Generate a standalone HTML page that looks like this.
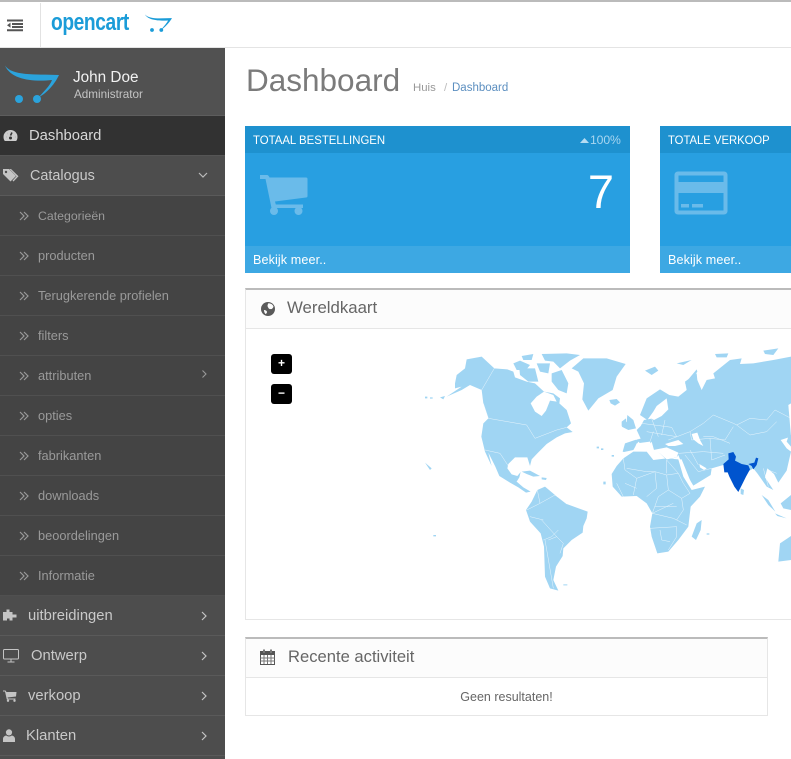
<!DOCTYPE html>
<html><head><meta charset="utf-8"><title>Dashboard</title>
<style>
html,body{margin:0;padding:0;background:#fff;}
body{width:791px;height:759px;overflow:hidden;position:relative;font-family:"Liberation Sans",sans-serif;}
.a{position:absolute;white-space:nowrap;}
.row{position:absolute;left:0;width:225px;height:39px;border-bottom:1px solid #5a5a5a;}
.main{background:#4d4d4d;color:#c9c9c9;font-size:14.8px;line-height:41px;}
.sub{background:#444;color:#9a9a9a;font-size:12.8px;line-height:40px;border-bottom-color:#505050;}
.row span{position:absolute;top:0;}
.row svg{position:absolute;}
.dbl{left:19px;top:15px;}
.chev{left:200px;top:15px;}
.card{position:absolute;top:126px;height:147px;background:#289fe1;overflow:hidden;color:#fff;}
.ch{position:absolute;left:0;top:0;width:100%;height:27px;background:#1e91cf;}
.cf{position:absolute;left:0;bottom:0;width:100%;height:27px;background:#3da8e3;}
.ct{font-size:12.2px;line-height:16px;color:#fff;transform-origin:0 0;}
</style></head><body>

<!-- top bar -->
<div class="a" style="left:0;top:0;width:791px;height:3px;background:#fff;border-top:2px solid #bbb;box-sizing:border-box"></div>
<div class="a" style="left:0;top:47px;width:791px;height:1px;background:#e4e4e4"></div>
<div class="a" style="left:40px;top:3px;width:1px;height:44px;background:#e2e2e2"></div>
<svg class="a" style="left:6px;top:19px" width="18" height="13" viewBox="0 0 18 13"><path d="M1 0.500H17V2.500H1zM6 4H17V6H6zM6 7H17V9H6zM1 10.300H17V12.300H1zM4.500 3.600V8.800L1 6.200z" fill="#555"/></svg>
<div class="a" style="left:51px;top:8px;font:bold 24px/30px 'Liberation Sans',sans-serif;color:#1b9cd8;letter-spacing:-.5px;transform:scaleX(.8);transform-origin:0 0">opencart</div>
<svg class="a" style="left:143px;top:13px" width="31" height="23" viewBox="0 0 31 23"><path d="M2 1.500C7 7 19 5 29 5.200C26 10 21 15 18 17C21 13 24 10 25 7.500C15 8 5 7 2 1.500z" fill="#1b9cd8"/><circle cx="9" cy="17" r="1.900" fill="#1b9cd8"/><circle cx="18.300" cy="17" r="1.900" fill="#1b9cd8"/></svg>

<!-- sidebar -->
<div class="a" style="left:0;top:48px;width:225px;height:711px;background:#4d4d4d"></div>
<div class="a" style="left:0;top:48px;width:225px;height:67px;background:#515151;border-bottom:1px solid #5d5d5d"></div>
<svg class="a" style="left:4px;top:64px" width="56" height="42" viewBox="0 0 56 42"><path d="M1 1.500C8 12 30 10 55 11C50 22 40 31 35 33C39 28 46 22 48 16C30 18 7 16 1 1.500z" fill="#2ba3dc"/><circle cx="15" cy="35" r="4" fill="#2ba3dc"/><circle cx="33" cy="35" r="4" fill="#2ba3dc"/></svg>
<div class="a" style="left:73px;top:68px;font-size:15.300px;line-height:20px;color:#f2f2f2">John Doe</div>
<div class="a" style="left:74px;top:87px;font-size:11.700px;line-height:15px;color:#c4c4c4">Administrator</div>

<div class="row main" style="top:116px;background:#323232;color:#d8d8d8;border-bottom-color:#555"><svg style="left:3px;top:13px" width="15" height="13" viewBox="0 0 15 13"><path d="M7.500 1A7 7 0 0 0 .5 8C.5 9.500 1 11 1.800 12H13.200C14 11 14.500 9.500 14.500 8A7 7 0 0 0 7.500 1z" fill="#ccc"/><path d="M7.500 6.500L9 3.500M3 8h.1M4.500 4.500h.1M12 8h.1M7.500 3h.1" stroke="#333" stroke-width="1.500" fill="none"/><circle cx="7.500" cy="9" r="1.500" fill="#333"/></svg><span style="left:29px">Dashboard</span></div>
<div class="row main" style="top:156px"><svg style="left:3px;top:12px" width="16" height="15" viewBox="0 0 16 15"><path d="M0 1H6L13 8L7.500 13.500L0 6z" fill="#c4c4c4"/><path d="M8 1L15.500 8.300L10.500 13.500L9.500 12.600L13.500 8.300L6.500 1z" fill="#c4c4c4"/><circle cx="3" cy="4" r="1.200" fill="#4d4d4d"/></svg><span style="left:30px;font-size:14.400px">Catalogus</span><svg class="chev" style="left:198px;top:16px" width="10" height="7" viewBox="0 0 10 7"><path d="M1 1L5 5L9 1" stroke="#bbb" stroke-width="1.200" fill="none"/></svg></div>

<div class="row sub" style="top:196px"><svg class="dbl" width="10" height="10" viewBox="0 0 10 10"><path d="M1 1L5 5L1 9M5 1L9 5L5 9" stroke="#999" stroke-width="1.200" fill="none"/></svg><span style="left:38px;font-size:12.300px">Categorieën</span></div>
<div class="row sub" style="top:236px"><svg class="dbl" width="10" height="10" viewBox="0 0 10 10"><path d="M1 1L5 5L1 9M5 1L9 5L5 9" stroke="#999" stroke-width="1.200" fill="none"/></svg><span style="left:38px">producten</span></div>
<div class="row sub" style="top:276px"><svg class="dbl" width="10" height="10" viewBox="0 0 10 10"><path d="M1 1L5 5L1 9M5 1L9 5L5 9" stroke="#999" stroke-width="1.200" fill="none"/></svg><span style="left:38px">Terugkerende profielen</span></div>
<div class="row sub" style="top:316px"><svg class="dbl" width="10" height="10" viewBox="0 0 10 10"><path d="M1 1L5 5L1 9M5 1L9 5L5 9" stroke="#999" stroke-width="1.200" fill="none"/></svg><span style="left:38px">filters</span></div>
<div class="row sub" style="top:356px"><svg class="dbl" width="10" height="10" viewBox="0 0 10 10"><path d="M1 1L5 5L1 9M5 1L9 5L5 9" stroke="#999" stroke-width="1.200" fill="none"/></svg><span style="left:38px">attributen</span><svg class="chev" style="top:13px;left:201px" width="7" height="10" viewBox="0 0 7 10"><path d="M1.500 1.500L5 5L1.500 8.500" stroke="#999" stroke-width="1.100" fill="none"/></svg></div>
<div class="row sub" style="top:396px"><svg class="dbl" width="10" height="10" viewBox="0 0 10 10"><path d="M1 1L5 5L1 9M5 1L9 5L5 9" stroke="#999" stroke-width="1.200" fill="none"/></svg><span style="left:38px">opties</span></div>
<div class="row sub" style="top:436px"><svg class="dbl" width="10" height="10" viewBox="0 0 10 10"><path d="M1 1L5 5L1 9M5 1L9 5L5 9" stroke="#999" stroke-width="1.200" fill="none"/></svg><span style="left:38px">fabrikanten</span></div>
<div class="row sub" style="top:476px"><svg class="dbl" width="10" height="10" viewBox="0 0 10 10"><path d="M1 1L5 5L1 9M5 1L9 5L5 9" stroke="#999" stroke-width="1.200" fill="none"/></svg><span style="left:38px">downloads</span></div>
<div class="row sub" style="top:516px"><svg class="dbl" width="10" height="10" viewBox="0 0 10 10"><path d="M1 1L5 5L1 9M5 1L9 5L5 9" stroke="#999" stroke-width="1.200" fill="none"/></svg><span style="left:38px">beoordelingen</span></div>
<div class="row sub" style="top:556px"><svg class="dbl" width="10" height="10" viewBox="0 0 10 10"><path d="M1 1L5 5L1 9M5 1L9 5L5 9" stroke="#999" stroke-width="1.200" fill="none"/></svg><span style="left:38px">Informatie</span></div>

<div class="row main" style="top:596px"><svg style="left:3px;top:13px" width="14" height="12" viewBox="0 0 14 12"><path d="M0 3H3.500V0.500H6.500V3H9.500V5.500H13.500V8.500H9.500V11.500H6.500V9.500H4V11.500H0z" fill="#c4c4c4"/></svg><span style="left:28px">uitbreidingen</span><svg class="chev" width="8" height="10" viewBox="0 0 8 10"><path d="M2 1L6 5L2 9" stroke="#c4c4c4" stroke-width="1.200" fill="none"/></svg></div>
<div class="row main" style="top:636px"><svg style="left:3px;top:13px" width="16" height="14" viewBox="0 0 16 14"><rect x=".5" y=".5" width="15" height="9.500" rx="1" fill="none" stroke="#c4c4c4"/><path d="M8 10.500V12.500M4.500 13H11.500" stroke="#c4c4c4" fill="none"/></svg><span style="left:31px">Ontwerp</span><svg class="chev" width="8" height="10" viewBox="0 0 8 10"><path d="M2 1L6 5L2 9" stroke="#c4c4c4" stroke-width="1.200" fill="none"/></svg></div>
<div class="row main" style="top:676px"><svg style="left:3px;top:14px" width="14" height="12" viewBox="0 0 14 12"><path d="M0 .5H2.500L3.500 2H13.500L13 6.500L4.500 7.500L5 8.500H12.500V9.500H3.800L2 1.500H0z" fill="#c4c4c4"/><circle cx="5" cy="10.700" r="1.200" fill="#c4c4c4"/><circle cx="11.500" cy="10.700" r="1.200" fill="#c4c4c4"/></svg><span style="left:28px">verkoop</span><svg class="chev" width="8" height="10" viewBox="0 0 8 10"><path d="M2 1L6 5L2 9" stroke="#c4c4c4" stroke-width="1.200" fill="none"/></svg></div>
<div class="row main" style="top:716px"><svg style="left:3px;top:13px" width="12" height="13" viewBox="0 0 12 13"><circle cx="6" cy="3.400" r="3.100" fill="#c4c4c4"/><path d="M0 13V10C0 8 1.500 6.800 3.200 6.500C5 7.800 7 7.800 8.800 6.500C10.500 6.800 12 8 12 10V13z" fill="#c4c4c4"/></svg><span style="left:26px">Klanten</span><svg class="chev" width="8" height="10" viewBox="0 0 8 10"><path d="M2 1L6 5L2 9" stroke="#c4c4c4" stroke-width="1.200" fill="none"/></svg></div>

<!-- page title -->
<div class="a" style="left:246px;top:61px;font-size:31.500px;line-height:38px;color:#7b7b7b">Dashboard</div>
<div class="a" style="left:413px;top:81px;font-size:11.400px;line-height:14px;color:#999">Huis</div>
<div class="a" style="left:444px;top:81px;font-size:11.400px;line-height:14px;color:#bbb">/</div>
<div class="a" style="left:452px;top:81px;font-size:11.500px;line-height:14px;color:#5c8fc0">Dashboard</div>

<!-- card 1 -->
<div class="card" style="left:245px;width:385px">
  <div class="ch"></div><div class="cf"></div>
  <div class="a ct" style="left:8px;top:6px;transform:scaleX(.935)">TOTAAL BESTELLINGEN</div>
  <svg class="a" style="left:335px;top:12px" width="9" height="5" viewBox="0 0 9 5"><path d="M0 5L4.500 0L9 5z" fill="#b5dcf2"/></svg>
  <div class="a" style="left:345px;top:6px;font-size:12.200px;line-height:16px;color:#a9d6f0;letter-spacing:-.1px">100%</div>
  <svg class="a" style="left:14px;top:48px" width="50" height="42" viewBox="0 0 50 42"><path d="M1 1H8C9 1 10 2 10.500 3.500H47C48 3.500 48.500 4 48.500 5V22C48.500 23 48 23.500 47 23.500L16 27.500L16.800 30.500H44V34H12.500L6.500 5H1z" fill="#6abbea"/><circle cx="15" cy="37" r="4" fill="#6abbea"/><circle cx="39.500" cy="37" r="4" fill="#6abbea"/></svg>
  <div class="a" style="right:16px;top:40px;font-size:47px;line-height:52px;color:#fff">7</div>
  <div class="a" style="left:8px;top:126px;font-size:12.600px;line-height:16px;color:#fff;letter-spacing:.1px">Bekijk meer..</div>
</div>
<!-- card 2 -->
<div class="card" style="left:660px;width:131px">
  <div class="ch"></div><div class="cf"></div>
  <div class="a ct" style="left:8px;top:6px;transform:scaleX(.925)">TOTALE VERKOOP</div>
  <svg class="a" style="left:14px;top:45px" width="54" height="44" viewBox="0 0 54 44"><path d="M4 .5H50C52 .5 53.500 2 53.500 4V40C53.500 42 52 43.500 50 43.500H4C2 43.500 .5 42 .5 40V4C.5 2 2 .5 4 .5zM4.500 4.500V11H49.500V4.500zM4.500 22V39.500H49.500V22z" fill="#6abbea" fill-rule="evenodd"/><path d="M7 33H15V36.500H7zM18 33H29V36.500H18z" fill="#6abbea"/></svg>
  <div class="a" style="left:8px;top:126px;font-size:12.600px;line-height:16px;color:#fff;letter-spacing:.1px">Bekijk meer..</div>
</div>

<!-- world map panel -->
<div class="a" style="left:245px;top:288px;width:550px;height:332px;box-sizing:border-box;border:1px solid #e6e6e6;border-top:2px solid #bbb;background:#fff"></div>
<div class="a" style="left:246px;top:290px;width:545px;height:38px;background:#fcfcfc;border-bottom:1px solid #e6e6e6"></div>
<svg class="a" style="left:261px;top:302px" width="14" height="14" viewBox="0 0 14 14"><circle cx="7" cy="7" r="7" fill="#5a5a5a"/><path d="M7 1.500C9 1 11.500 2 12.500 4.500C12 6.500 10.500 7.500 9.500 7C8 7.500 7 5.500 6.500 4C6.500 3 7 2.500 7 1.500zM3 8C4.500 8 6 9 6 10C6 11 5 12 4.500 12C3.500 11 3 9.500 3 8z" fill="#fcfcfc"/></svg>
<div class="a" style="left:287px;top:298px;font-size:16.800px;line-height:20px;color:#666">Wereldkaart</div>
<div class="a" style="left:271px;top:354px;width:21px;height:20px;background:#000;border-radius:3px;color:#fff;font:bold 12px/19px 'Liberation Sans',sans-serif;text-align:center">+</div>
<div class="a" style="left:271px;top:384px;width:21px;height:20px;background:#000;border-radius:3px;color:#fff;font:bold 12px/18px 'Liberation Sans',sans-serif;text-align:center">−</div>

<svg class="a" style="left:420px;top:340px" width="371" height="260" viewBox="0 0 1113 780">
<g fill="#a0d5f3">
<!-- N. America -->
<path d="M105 130L110 105L135 85L140 58L185 50L223 85L262 88L280 95L285 112L320 125L345 130L372 155L400 160L420 175L418 190L440 210L453 250L440 262L458 276L435 280L410 292L380 312L352 340L335 358L330 378L322 352L285 352L265 372L262 385L275 403L292 408L302 396L298 412L290 425L310 442L332 455L318 458L295 442L270 428L238 408L226 380L205 338L215 378L195 335L184 290L190 250L205 235L190 190L185 150L150 135L125 150L80 170L125 140L105 145Z"/>
<path d="M280 70L300 62L330 75L318 90L290 90ZM298 85L345 85L355 125L325 125L300 105ZM350 70L390 70L385 100L360 95ZM305 48L340 42L335 60L310 60ZM365 42L440 40L480 45L450 62L420 85L400 65L375 62ZM395 100L425 90L445 130L440 160L415 150L395 125Z"/>
<path d="M305 395L330 392L360 408L340 410L320 402ZM365 412L380 414L378 420L365 418Z"/>
<!-- Greenland -->
<path d="M455 85L490 55L560 55L617 72L590 110L578 150L535 175L505 212L487 178L492 130L475 95Z"/>
<path d="M568 180L590 177L600 187L585 197L572 190Z"/>
<path d="M675 92L705 80L715 92L695 105Z"/>
<!-- South America -->
<path d="M318 510L335 485L352 450L375 440L405 465L440 492L503 515L500 535L490 558L488 578L455 600L430 625L428 648L408 680L400 720L415 752L390 745L375 710L372 620L362 580L330 545Z"/>
<!-- Africa -->
<path d="M575 402L590 378L610 355L640 335L680 335L700 360L740 355L775 358L790 410L815 450L855 440L840 470L812 500L805 560L775 600L745 635L712 640L695 590L690 560L697 520L680 490L650 468L605 470L578 440Z"/>
<path d="M815 590L830 550L845 540L842 570L828 600Z"/>
<!-- Eurasia -->
<path d="M608 335L615 310L645 300L662 296L650 270L662 258L672 240L695 236L702 240L725 228L745 208L740 175L710 198L700 215L682 240L660 225L680 175L720 148L748 165L775 170L800 150L795 125L830 100L832 120L845 150L860 120L885 115L880 100L930 60L965 55L960 72L1000 70L1060 60L1113 50V190L1105 195L1113 290L1082 300L1100 325L1113 335L1100 392L1075 428L1062 402L1042 385L1035 412L1060 450L1040 440L1012 400L1000 385L975 400L955 455L930 405L910 375L875 385L872 405L820 437L795 395L775 345L770 352L740 360L720 340L702 330L695 305L680 330L655 305L640 330L612 336Z"/>
<path d="M605 260L620 245L622 225L640 240L648 265L625 270ZM605 245L618 235L618 255L605 258Z"/>
<path d="M1105 290L1113 285V320L1100 305Z"/>
<path d="M885 42L925 40L920 52L890 52ZM1030 32L1075 25L1060 45L1035 42ZM770 70L815 60L790 75ZM795 130L830 88L832 95L805 135Z" />
<path d="M1025 465L1045 480L1066 515L1045 495ZM1082 490L1113 465V510L1090 505ZM1065 520L1100 535L1072 528ZM962 445L972 450L970 465L962 462Z"/>
<!-- Australia -->
<path d="M1075 665L1080 610L1113 588V660Z"/>
<!-- small islands -->
<path d="M15 368L35 385L30 390ZM60 172L75 168L70 178ZM15 170H22V175H15ZM30 172H38V176H30ZM530 320H537V325H530ZM543 325H550V330H543ZM550 425H557V433H550ZM40 585H48V589H40ZM575 345H582V350H575ZM860 580H868V584H860ZM430 733H442V736H430Z"/>
</g>
<!-- water -->
<g fill="#fff">
<path d="M332 190L350 170L372 155L400 165L410 185L390 182L378 212L365 228L345 215Z"/>
<path d="M650 310L690 305L700 330L740 322L775 338L770 352L740 358L720 340L700 332L678 335L640 334Z"/>
<path d="M735 312L775 300L790 312L765 318L745 318Z"/>
<path d="M815 282L832 278L840 300L850 318L835 310L820 298Z"/>
<path d="M777 358L785 358L818 440L810 430Z"/>
<path d="M838 372L860 385L852 390L840 382Z"/>
</g>
<!-- borders -->
<g fill="none" stroke="#fff" stroke-width="1.500" opacity=".75">
<path d="M223 85L185 150M205 235L320 255L345 295L410 270L440 262M195 330L240 340L265 378M190 190L205 235"/>
<path d="M290 425L300 420M352 450L360 490L320 510M360 490L405 465M405 465L440 492M365 540L410 590L430 610L420 640M370 600L395 590L415 570M370 540L330 530M400 745L375 600M410 590L385 600"/>
<path d="M610 355L615 390L650 415L705 395L740 405L775 400L740 360M620 385L680 395L705 395M740 360V400M705 395L710 445L680 470M650 415L640 465M615 430L650 445M590 430L610 470M740 405L745 450L715 470L697 520L760 535L800 555M775 400L790 430L810 460L785 475L790 510L770 540M745 450L785 475M697 520L760 490M690 565L770 560L770 590L745 630M720 570L725 600L750 605M705 500L770 500"/>
<path d="M625 270L650 300M665 250L755 262L770 290L680 275M695 236L715 290M735 240L725 285M700 275L690 305M745 300L810 275L850 250L880 225L940 250L950 255L990 235L1040 240L1065 210L1113 235M810 275L815 300L870 295L915 300L940 260M950 255L990 285L1040 275L1070 245M850 290L880 290L930 310M870 295L875 360L915 345M775 340L850 335L910 340M795 345L835 395L875 385M810 330L835 375M1030 385L1045 440M1045 390L1070 400M1050 410L1070 430M1000 385L1010 420"/>
</g>
<!-- India -->
<path d="M925 340L940 336L948 350L945 362L965 372L985 376L990 388L978 410L968 430L955 456L943 440L928 410L923 397L913 397L910 372L926 358Z" fill="#0054ce"/>
<path d="M985 372L1003 368L1008 353L1015 355L1010 375L1000 388L995 378Z" fill="#0054ce"/>
</svg>

<!-- recent activity -->
<div class="a" style="left:245px;top:637px;width:523px;height:79px;box-sizing:border-box;border:1px solid #e6e6e6;border-top:2px solid #bbb;background:#fff"></div>
<div class="a" style="left:246px;top:639px;width:521px;height:38px;background:#fcfcfc;border-bottom:1px solid #e6e6e6"></div>
<svg class="a" style="left:260px;top:649px" width="15" height="16" viewBox="0 0 15 16"><path d="M0.500 2.500H14.500V15.500H0.500z" fill="#fff" stroke="#555"/><path d="M0 2H15V6H0z" fill="#555"/><path d="M4 .5V4M11 .5V4" stroke="#777" stroke-width="2"/><path d="M.5 9H14.500M.5 12H14.500M4 6V15M7.500 6V15M11 6V15" stroke="#777"/></svg>
<div class="a" style="left:288px;top:647px;font-size:16.600px;line-height:20px;color:#666">Recente activiteit</div>
<div class="a" style="left:246px;top:689px;width:521px;text-align:center;font-size:12.500px;line-height:16px;color:#666">Geen resultaten!</div>
</body></html>
